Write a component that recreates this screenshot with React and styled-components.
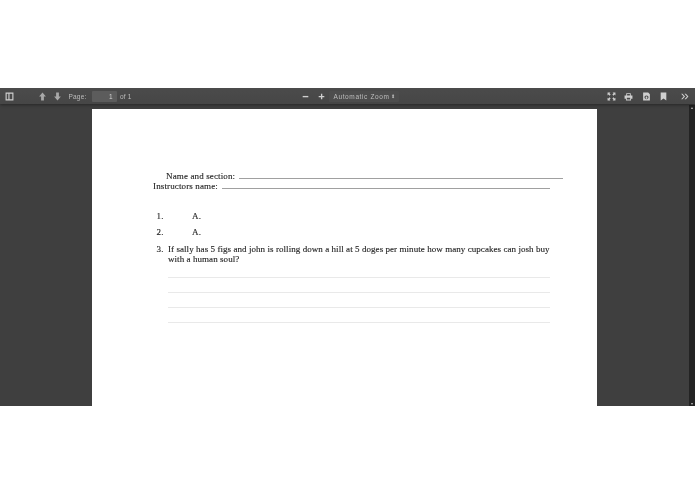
import React from "react";
import styled, { createGlobalStyle } from "styled-components";

const Global = createGlobalStyle`
  html, body { margin: 0; padding: 0; background: #fff; overflow: hidden; }
  body { font-family: "Liberation Sans", Arial, sans-serif; }
`;

const Viewer = styled.div`
  margin-top: 88px;
  width: 695px;
  height: 318px;
  background: #404040;
  display: flex;
  flex-direction: column;
  overflow: hidden;
  filter: blur(0.3px);
`;

const Toolbar = styled.div`
  flex: none;
  height: 16px;
  background: linear-gradient(#4b4b4b, #464646);
  box-shadow: 0 1px 3px rgba(0,0,0,.4);
  display: flex;
  align-items: center;
  color: #bdbdbd;
  font-size: 6.5px;
  position: relative;
  z-index: 1;
`;

const Group = styled.div`
  display: flex;
  align-items: center;
  flex: none;
  width: ${p => p.$width}px;
  padding-left: ${p => p.$left || 0}px;
  box-sizing: border-box;
`;

const IconBtn = styled.span`
  display: inline-flex;
  width: 9px;
  height: 9px;
  flex: none;
  color: ${p => p.$dim ? "#a8a8a8" : "#cfcfcf"};
  margin-left: ${p => p.$ml || 0}px;
  svg { width: 9px; height: 9px; display: block; fill: currentColor; }
`;

const Label = styled.span`
  margin-left: ${p => p.$ml || 0}px;
  white-space: nowrap;
  letter-spacing: .2px;
`;

const PageInput = styled.span`
  width: 25px;
  height: 11px;
  margin-left: 5px;
  box-sizing: border-box;
  background: #5c5c5c;
  border-radius: 1px;
  color: #d2d2d2;
  text-align: right;
  padding-right: 4px;
  line-height: 11px;
`;

const ZoomSelect = styled.span`
  margin-left: 3px;
  width: 70px;
  height: 11px;
  box-sizing: border-box;
  padding: 0 3px 0 4.5px;
  line-height: 11px;
  border-radius: 1px;
  background: #4d4d4d;
  display: flex;
  justify-content: space-between;
  white-space: nowrap;
  letter-spacing: .62px;
`;

const Arrows = styled.span`
  font-size: 5px;
  line-height: 11px;
`;

const Main = styled.div`
  flex: 1;
  min-height: 0;
  display: flex;
  background: #3f3f3f;
`;

const Canvas = styled.div`
  flex: 1;
  padding: 5px 0 0 92px;
  min-width: 0;
`;

const Page = styled.div`
  width: 505px;
  height: 400px;
  box-sizing: border-box;
  background: #fff;
  padding-top: 62px;
  font-family: "Liberation Serif", "Times New Roman", serif;
  font-size: 9px;
  color: #222;
  letter-spacing: .13px;
  -webkit-text-stroke: .12px #222;
`;

const FieldRow = styled.div`
  display: flex;
  align-items: center;
  height: 10px;
  margin-left: ${p => p.$left}px;
  width: ${p => p.$width}px;
  white-space: nowrap;
`;

const FieldLine = styled.span`
  flex: 1;
  height: 1px;
  margin-left: 4px;
  margin-top: 4px;
  background: #a0a0a0;
`;

const Question = styled.div`
  display: flex;
  margin-left: 64.5px;
  min-height: 10px;
  line-height: 10px;
  margin-top: ${p => p.$top}px;
`;

const Num = styled.span`
  flex: none;
  width: ${p => p.$width}px;
`;

const Body = styled.span`
  display: block;
  width: 384px;
  white-space: nowrap;
  line-height: 10px;
  letter-spacing: .06px;
`;

const Answers = styled.div`
  display: flex;
  flex-direction: column;
  gap: 14px;
  margin: 13px 0 0 76px;
  width: 382px;
`;

const AnswerLine = styled.div`
  height: 1px;
  background: #e9e9e9;
`;

const Scrollbar = styled.div`
  flex: none;
  width: 6px;
  background: #232323;
  margin-top: 1px;
  display: flex;
  flex-direction: column;
  justify-content: space-between;
  align-items: center;
  color: #bbb;
  font-size: 4px;
  line-height: 5px;
`;

const Up = () => <svg viewBox="0 0 16 16"><path d="M8 1 14 8H10.5V15H5.5V8H2Z" /></svg>;
const Down = () => <svg viewBox="0 0 16 16"><path d="M8 15 14 8H10.5V1H5.5V8H2Z" /></svg>;
const Sidebar = () => <svg viewBox="0 0 16 16"><path fillRule="evenodd" d="M1 1H15V15H1ZM3 3V13H6V3ZM8 3V13H13V3Z" /></svg>;
const Minus = () => <svg viewBox="0 0 16 16"><rect x="3" y="7" width="10" height="2.4" /></svg>;
const Plus = () => <svg viewBox="0 0 16 16"><path d="M7 3H9.4V7H13V9.4H9.4V13H7V9.4H3V7H7Z" /></svg>;
const Fullscreen = () => <svg viewBox="0 0 16 16"><path d="M1 1H6L4.500 2.500 6.500 4.500 4.500 6.500 2.500 4.500 1 6ZM15 1V6L13.500 4.500 11.500 6.500 9.500 4.500 11.500 2.500 10 1ZM1 15V10L2.500 11.500 4.500 9.500 6.500 11.500 4.500 13.500 6 15ZM15 15H10L11.500 13.500 9.500 11.500 11.500 9.500 13.500 11.500 15 10Z" /></svg>;
const Print = () => <svg viewBox="0 0 16 16"><path fillRule="evenodd" d="M4 2H12V6H15V12H12.500V15H3.500V12H1V6H4ZM5.500 3.500V6H10.500V3.500ZM5 10V13.500H11V10Z" /></svg>;
const Save = () => <svg viewBox="0 0 16 16"><path fillRule="evenodd" d="M2 1H11L14 4V15H2ZM8 6A3.500 3.500 0 1 0 8.010 6ZM6.800 8H9.200V10H10.500L8 12.500 5.500 10H6.800Z" /></svg>;
const Bookmark = () => <svg viewBox="0 0 16 16"><path d="M3 1H13V15L8 11.500 3 15Z" /></svg>;
const More = () => <svg viewBox="0 0 16 16"><path d="M2 3H4.500L9 8 4.500 13H2L6.500 8ZM8 3H10.500L15 8 10.500 13H8L12.500 8Z" /></svg>;

export default function App() {
  return (
    <>
      <Global />
      <Viewer>
        <Toolbar>
          <Group $width={301} $left={5}>
            <IconBtn><Sidebar /></IconBtn>
            <IconBtn $ml={24} $dim><Up /></IconBtn>
            <IconBtn $ml={6} $dim><Down /></IconBtn>
            <Label $ml={6.5}>Page:</Label>
            <PageInput>1</PageInput>
            <Label $ml={3.5}>of 1</Label>
          </Group>
          <Group $width={306}>
            <IconBtn><Minus /></IconBtn>
            <IconBtn $ml={7}><Plus /></IconBtn>
            <ZoomSelect>Automatic Zoom <Arrows>⬍</Arrows></ZoomSelect>
          </Group>
          <Group $width={88}>
            <IconBtn><Fullscreen /></IconBtn>
            <IconBtn $ml={8}><Print /></IconBtn>
            <IconBtn $ml={8.500}><Save /></IconBtn>
            <IconBtn $ml={8}><Bookmark /></IconBtn>
            <IconBtn $ml={12}><More /></IconBtn>
          </Group>
        </Toolbar>
        <Main>
          <Canvas>
            <Page>
              <FieldRow $left={74} $width={397}>Name and section:<FieldLine /></FieldRow>
              <FieldRow $left={61} $width={397}>Instructors name:<FieldLine /></FieldRow>
              <Question $top={20}><Num $width={35.5}>1.</Num>A.</Question>
              <Question $top={6}><Num $width={35.5}>2.</Num>A.</Question>
              <Question $top={7}>
                <Num $width={11.5}>3.</Num>
                <Body>If sally has 5 figs and john is rolling down a hill at 5 doges per minute how many cupcakes can josh buy<br />with a human soul?</Body>
              </Question>
              <Answers>
                <AnswerLine />
                <AnswerLine />
                <AnswerLine />
                <AnswerLine />
              </Answers>
            </Page>
          </Canvas>
          <Scrollbar><span>▴</span><span>▾</span></Scrollbar>
        </Main>
      </Viewer>
    </>
  );
}
